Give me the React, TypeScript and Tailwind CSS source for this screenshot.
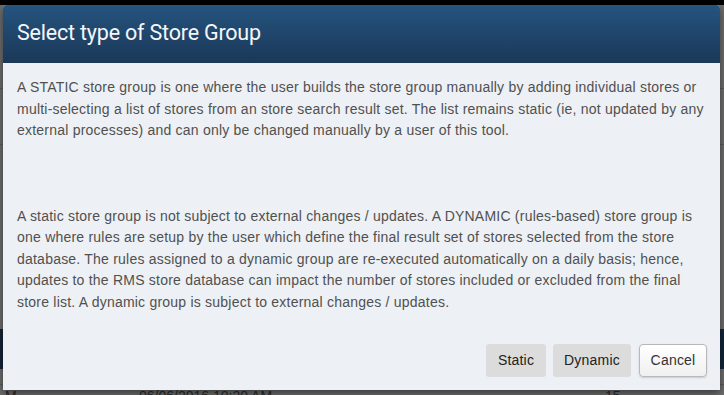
export default function App() {
  return (
    <div className="relative w-[724px] h-[395px] overflow-hidden bg-[#6e6e6e] font-['Liberation_Sans',Arial,sans-serif]">
      {/* page behind the modal, dimmed */}
      <div className="flex flex-col h-full">
        <div className="h-[5px] bg-black" />
        <div className="flex-1 flex flex-col">
          <div className="h-[84px] border-b border-[#5c5c5c]" />
          <div className="h-[56px] border-b border-[#5c5c5c]" />
          <div className="flex-1" />
          <div className="h-[40px] bg-[#14253a]" />
          <div className="h-[16px] border-b border-[#5c5c5c]" />
          <div className="h-[10px] flex text-[14px] text-[#2a2a2a] leading-[20px] pt-[1px]">
            <span className="w-[139px] pl-[5px]">M</span>
            <span className="w-[466px]">06/06/2016 10:20 AM</span>
            <span>15</span>
          </div>
        </div>
      </div>

      {/* modal */}
      <div className="absolute left-[3px] top-[5px] w-[717px] h-[385px] flex flex-col rounded-t-[4px] bg-[#edf0f4] shadow-[0_3px_9px_rgba(0,0,0,0.5)]">
        <div className="h-[58px] shrink-0 flex items-center px-[14px] rounded-t-[4px] bg-gradient-to-b from-[#25547f] to-[#1b3858]">
          <h1 className="font-['Roboto',sans-serif] text-[21.5px] text-[#f4f6f9] tracking-[-0.2px] mt-[-2px]">
            Select type of Store Group
          </h1>
        </div>
        <div className="flex-1 pl-[14px] pr-[6px] pt-[14px] text-[14px] leading-[21.5px] tracking-[0.22px] text-[#505050]">
          <p>
            A STATIC store group is one where the user builds the store group manually by adding individual stores or
            multi-selecting a list of stores from an store search result set. The list remains static (ie, not updated by any
            external processes) and can only be changed manually by a user of this tool.
          </p>
          <p className="mt-[64px]">
            A static store group is not subject to external changes / updates. A DYNAMIC (rules-based) store group is
            one where rules are setup by the user which define the final result set of stores selected from the store
            database. The rules assigned to a dynamic group are re-executed automatically on a daily basis; hence,
            updates to the RMS store database can impact the number of stores included or excluded from the final
            store list. A dynamic group is subject to external changes / updates.
          </p>
        </div>
        <div className="flex justify-end gap-[7px] pr-[13px] pb-[13px] text-[14px] tracking-[0.2px]">
          <button className="w-[60px] h-[33px] rounded-[3px] bg-[#dcdcdc] text-[#222]">Static</button>
          <button className="w-[78px] h-[33px] rounded-[3px] bg-[#dcdcdc] text-[#222]">Dynamic</button>
          <button className="ml-[1px] w-[68px] h-[33px] rounded-[4px] bg-gradient-to-b from-white to-[#f0f0f0] border border-[#b8b8b8] shadow-[0_1px_2px_rgba(0,0,0,0.15)] text-[#333]">
            Cancel
          </button>
        </div>
      </div>
    </div>
  );
}
